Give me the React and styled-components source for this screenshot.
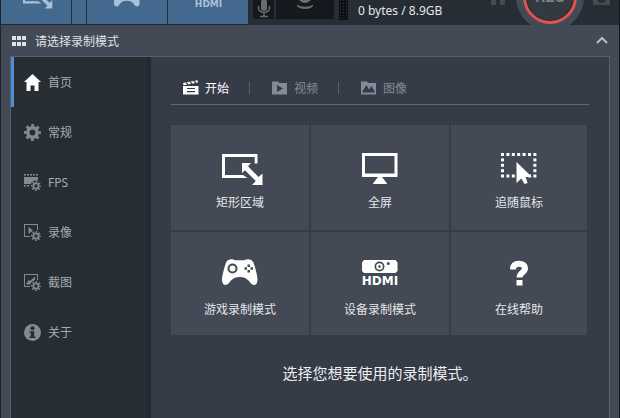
import { useState } from 'react'
import styled, { createGlobalStyle } from 'styled-components'

const GlobalStyle = createGlobalStyle`
  * {
    box-sizing: border-box;
  }
  body {
    margin: 0;
    background: #353b47;
    font-family: 'Noto Sans', 'Noto Sans CJK SC', sans-serif;
    font-size: 12px;
  }
  button {
    margin: 0;
    padding: 0;
    border: 0;
    background: none;
    color: inherit;
    font: inherit;
    cursor: pointer;
  }
  svg {
    display: block;
    flex: none;
    overflow: visible;
  }
`

const Window = styled.div`
  min-height: 100vh;
  display: flex;
  flex-direction: column;
  background: #434a56;
  border-left: 1px solid #20242c;
  border-right: 1px solid #10141a;
`

const TopBar = styled.header`
  height: 25px;
  display: flex;
  align-items: flex-end;
  overflow: hidden;
  background: #262d34;
`

const ModeButton = styled.button`
  width: ${(props) => props.$width};
  height: 80px;
  padding-bottom: ${(props) => props.$lift || '0'};
  display: flex;
  flex-direction: column;
  align-items: center;
  justify-content: flex-end;
  flex: none;
  background: #44698f;
  border-right: 1px solid #1f2f42;
  border-bottom: 1px solid #1f2a38;
  color: #a9c0d8;
`

const Device = styled.div`
  width: ${(props) => props.$width};
  height: 60px;
  margin: 0 0 6px 2px;
  display: flex;
  align-items: flex-end;
  justify-content: center;
  flex: none;
  background: #15191e;
  color: #686b6f;
`

const Devices = styled.div`
  display: flex;
  margin-left: 2px;
`

const Meter = styled.div`
  width: 9px;
  height: 60px;
  margin: 0 0 5px 5px;
  background-color: #0c0f13;
  background-image: radial-gradient(#30353c 1px, transparent 1px);
  background-size: 3px 3px;
`

const Storage = styled.span`
  margin-left: 10px;
  padding-bottom: 6px;
  line-height: 16px;
  color: #e4e6e8;
`

const Recorder = styled.div`
  margin-left: auto;
  padding-right: 9px;
  display: flex;
  align-items: flex-end;
  color: #454b53;
`

const IconButton = styled.button`
  padding-bottom: 20px;
`

const RecButton = styled.button`
  width: 54px;
  height: 54px;
  margin: 0 16px 1px 18px;
  border: 3px solid #e0544c;
  border-radius: 50%;
  background: #343a42;
  box-shadow: 0 0 0 7px #434a56, inset 0 0 0 1px #262b31;
  color: #7d8289;
  font-family: 'Liberation Sans', sans-serif;
  font-size: 14px;
  font-weight: bold;
`

const TitleBar = styled.div`
  height: 31px;
  padding: 0 11px;
  display: flex;
  align-items: center;
  gap: 8px;
  color: #dfe2e6;
`

const Title = styled.h1`
  margin: 0;
  padding-top: 2px;
  flex: 1;
  font-size: 12px;
  font-weight: normal;
  line-height: 16px;
`

const Panel = styled.div`
  flex: 1;
  margin: 0 9px;
  display: flex;
  border: 1px solid #5a616d;
  border-bottom: 0;
  background: #353b47;
`

const Sidebar = styled.nav`
  width: 140px;
  flex: none;
  background: #262d33;
  border-right: 4px solid #232930;
`

const NavItem = styled.button`
  width: 100%;
  height: 50px;
  padding-left: 10px;
  display: flex;
  align-items: center;
  gap: 7px;
  border-left: 3px solid ${(props) => (props.$active ? '#4a90d9' : 'transparent')};

  svg {
    color: ${(props) => (props.$active ? '#fff' : '#858991')};
  }
  span {
    padding-top: 2px;
    color: #a6aab1;
    line-height: 16px;
  }
`

const Main = styled.main`
  flex: 1;
  padding: 15px 20px 20px;
`

const Tabs = styled.div`
  display: flex;
  align-items: center;
  border-bottom: 1px solid #616875;
`

const Tab = styled.button`
  height: 32px;
  padding: 0 20px 0 ${(props) => (props.$first ? '12px' : '22px')};
  display: flex;
  align-items: center;
  gap: 6px;
  color: ${(props) => (props.$active ? '#fff' : '#858b96')};
`

const Divider = styled.span`
  width: 1px;
  height: 12px;
  background: #59606c;
`

const Tiles = styled.div`
  margin: 20px 2px 28px 0;
  display: grid;
  grid-template-columns: 138fr 138fr 136fr;
  grid-template-rows: 105px 103px;
  gap: 2px;
`

const Tile = styled.button`
  padding-top: 26px;
  display: flex;
  flex-direction: column;
  align-items: center;
  gap: 8px;
  background: #434a56;
  color: #fff;

  &:hover {
    background: #4b5360;
  }
`

const TileLabel = styled.span`
  line-height: 16px;
  color: #e3e5e8;
`

const Caption = styled.p`
  margin: 0;
  text-align: center;
  font-size: 15px;
  line-height: 20px;
  color: #eceef0;
`

const Hdmi = styled.text`
  font-family: 'DejaVu Sans', sans-serif;
  font-size: 12px;
  font-weight: bold;
`

function Svg({ w = 17, h = w, size = w, children }) {
  return (
    <svg
      width={size}
      height={(size * h) / w}
      viewBox={`0 0 ${w} ${h}`}
      fill="currentColor"
      aria-hidden="true"
    >
      {children}
    </svg>
  )
}

/* mode icons, drawn on a 36px box */

function RegionIcon({ size }) {
  return (
    <Svg w={36} size={size}>
      <path d="M0 3h35.500v9.500h-2.800V6H3v18h18l4.500 3H0z" />
      <path d="M20 12h9l-3 3.200L36.500 26 40.500 22.500V34H30l3.800-4L23 19.200 20 22z" />
    </Svg>
  )
}

function ScreenIcon() {
  return (
    <Svg w={36}>
      <path fillRule="evenodd" d="M0 2h35.500v24H0zM3 5v17.500h29.500V5z" />
      <path d="M16 26h4l5 6.500v.5H11v-.5z" />
    </Svg>
  )
}

function FollowIcon() {
  const top = [0, 5.400, 10.800, 16.200, 21.600, 27, 32.400]
  return (
    <Svg w={36}>
      {top.map((x) => (
        <rect key={x} x={x} y="2" width="3" height="3" />
      ))}
      {[7.400, 12.800, 18.200].map((y) => (
        <g key={y}>
          <rect x="0" y={y} width="3" height="3" />
          <rect x="32.400" y={y} width="3" height="3" />
        </g>
      ))}
      {[0, 5.400, 10.800, 27, 32.400].map((x) => (
        <rect key={x} x={x} y="23.500" width="3" height="3" />
      ))}
      <path d="M15.500 11v21l4.800-4.600 3.200 5.600 3.200-1-2.200-6H31z" />
    </Svg>
  )
}

function GamepadIcon({ size }) {
  return (
    <Svg w={36} size={size}>
      <path
        fillRule="evenodd"
        d="M8 1.500c2-.5 3 0 5 .8h9.500c2-.8 3-1.300 5-.8 2.600.6 3.700 1.700 4.500 4.500 1.500 5 3.600 12 3.500 16 0 3-1.500 5-3.500 5-2.400 0-3.800-2.600-5.500-4.500-2.300-2.500-5-3.500-8.700-3.500s-6.500 1-8.800 3.500C7.300 24.400 5.900 27 3.500 27 1.500 27 0 25 0 22 0 18 2 11 3.500 6 4.300 3.200 5.400 2.100 8 1.500zM10.500 5.500a5 5 0 1 0 0 10 5 5 0 1 0 0-10zM10.500 7.500a3 3 0 1 1 0 6 3 3 0 1 1 0-6zM25.500 6.500h2.500v2.500h-2.500zM25.500 12h2.500v2.500h-2.500zM22.500 9.200H25v2.500h-2.500zM28.500 9.200H31v2.500h-2.500z"
      />
    </Svg>
  )
}

function HdmiIcon() {
  return (
    <Svg w={36}>
      <path
        fillRule="evenodd"
        d="M2 2h31.500l2 2.500V13l-2 2H2l-2-2V4.500zM17.500 3.500a5 5 0 1 0 0 10 5 5 0 1 0 0-10zM17.500 5.200a3.300 3.300 0 1 1 0 6.600 3.300 3.300 0 1 1 0-6.600zM26.300 4a1.500 1.500 0 1 0 0 3 1.500 1.500 0 1 0 0-3z"
      />
      <circle cx="17.500" cy="8.500" r="1.300" fill="#434a56" />
      <Hdmi x="18" y="27" textAnchor="middle">
        HDMI
      </Hdmi>
    </Svg>
  )
}

function HelpIcon() {
  return (
    <Svg w={36}>
      <path
        d="M12 11.500C12 7 14.500 5.700 18 5.700c3.700 0 6 1.700 6 4.600 0 4.200-5.500 4.200-5.500 9.200"
        fill="none"
        stroke="currentColor"
        strokeWidth="6"
      />
      <rect x="15.500" y="22" width="6" height="5.500" />
    </Svg>
  )
}

/* sidebar icons */

function Gear({ cx, cy, r }) {
  const teeth = r * 0.85
  return (
    <g fill="none" stroke="currentColor">
      <circle cx={cx} cy={cy} r={r * 0.53} strokeWidth={r * 0.36} />
      <circle
        cx={cx}
        cy={cy}
        r={teeth}
        strokeWidth={r * 0.34}
        strokeDasharray={(teeth * Math.PI) / 8}
        strokeDashoffset={(teeth * Math.PI) / 16}
      />
    </g>
  )
}

function HomeIcon() {
  return (
    <Svg>
      <path d="M8.500 0 17 8h-2.500v9H10.500v-5.500h-4V17h-4V8H0z" />
    </Svg>
  )
}

function GearIcon() {
  return (
    <Svg>
      <circle cx="8.500" cy="8.500" r="4.700" fill="none" stroke="currentColor" strokeWidth="3.600" />
      <circle
        cx="8.500"
        cy="8.500"
        r="7.200"
        fill="none"
        stroke="currentColor"
        strokeWidth="2.600"
        strokeDasharray="2.827"
        strokeDashoffset="1.414"
      />
    </Svg>
  )
}

function FpsIcon() {
  return (
    <Svg>
      {[0, 3, 6, 9, 12].map((x) => (
        <rect key={x} x={x} y="0" width="2" height="1.500" />
      ))}
      <path d="M0 3h14v3.500c-4-.5-6.500 1-7 3.500H0z" />
      <rect x="0" y="11" width="2" height="1.500" />
      <rect x="3" y="11" width="2" height="1.500" />
      <Gear cx={12} cy={12} r={5} />
    </Svg>
  )
}

function VideoIcon() {
  return (
    <Svg>
      <path d="M0 0h14v6h-1V1H1v11h5v1H0z" />
      <path d="M4.500 3v7L9 6.500z" />
      <Gear cx={12} cy={12} r={5} />
    </Svg>
  )
}

function ShotIcon() {
  return (
    <Svg>
      <path d="M0 0h14v6h-1V1H1v11h5v1H0z" />
      <path d="M2 10.500 4.500 6l1.500 1L11 2.500V6L8 7.500l-2 3z" />
      <Gear cx={12} cy={12} r={5} />
    </Svg>
  )
}

function InfoIcon() {
  return (
    <Svg>
      <circle cx="8.500" cy="8.500" r="8.500" />
      <circle cx="8.500" cy="4.200" r="2" fill="#262d33" />
      <path d="M5.500 7.200h4.700v5.300h1.300V14h-6v-1.500h1.300V8.700H5.500z" fill="#262d33" />
    </Svg>
  )
}

/* tab icons */

function ClapperIcon() {
  return (
    <Svg w={16}>
      <path d="M0 3 14.500.3l.5 2.200L.5 5.300z" />
      <path d="M3 2.400 5 4.500M7 1.700l2 2.100M11 1l2 2" stroke="#353b47" strokeWidth="1.200" />
      <path
        fillRule="evenodd"
        d="M0 6h15.500v8.500H0zM4 8v1h8V8zM4 11v1.200h8V11z"
      />
    </Svg>
  )
}

function FolderVideoIcon() {
  return (
    <Svg w={16}>
      <path fillRule="evenodd" d="M0 1.500h6L7.500 3H15v11.500H0zM5 5v7l6-3.500z" />
    </Svg>
  )
}

function FolderImageIcon() {
  return (
    <Svg w={16}>
      <path
        fillRule="evenodd"
        d="M0 1.500h6L7.500 3H15v11.500H0zM1.500 12.500h12V11l-3-5-2.500 3.500L5.500 5l-4 6z"
      />
    </Svg>
  )
}

const navItems = [
  { label: '首页', Icon: HomeIcon },
  { label: '常规', Icon: GearIcon },
  { label: 'FPS', Icon: FpsIcon },
  { label: '录像', Icon: VideoIcon },
  { label: '截图', Icon: ShotIcon },
  { label: '关于', Icon: InfoIcon },
]

const tabs = [
  { label: '开始', Icon: ClapperIcon },
  { label: '视频', Icon: FolderVideoIcon },
  { label: '图像', Icon: FolderImageIcon },
]

const modes = [
  { label: '矩形区域', Icon: RegionIcon },
  { label: '全屏', Icon: ScreenIcon },
  { label: '追随鼠标', Icon: FollowIcon },
  { label: '游戏录制模式', Icon: GamepadIcon },
  { label: '设备录制模式', Icon: HdmiIcon },
  { label: '在线帮助', Icon: HelpIcon },
]

function Toolbar() {
  return (
    <TopBar>
      <ModeButton $width="71px" $lift="14px" aria-label="矩形区域">
        <RegionIcon size={26} />
      </ModeButton>
      <ModeButton $width="15px" aria-label="更多" />
      <ModeButton $width="81px" $lift="11px" aria-label="游戏录制模式">
        <GamepadIcon size={26} />
      </ModeButton>
      <ModeButton $width="81px" $lift="17px" aria-label="设备录制模式">
        <Svg w={36} h={10} size={27}>
          <Hdmi x="18" y="9" textAnchor="middle">
            HDMI
          </Hdmi>
        </Svg>
      </ModeButton>
      <Devices>
        <Device $width="21px">
          <Svg w={14} h={20}>
            <rect x="4" y="0" width="6" height="12" rx="3" />
            <path
              d="M1.500 7v2a5.500 4.500 0 0 0 11 0V7M7 13v4M3 17.500h8"
              fill="none"
              stroke="currentColor"
              strokeWidth="1.500"
            />
          </Svg>
        </Device>
        <Device $width="58px">
          <Svg w={18} h={27}>
            <circle cx="9" cy="4" r="7" />
            <path d="M1 12.500c4 3 12 3 16 0v1.500c-2 4-14 4-16 0z" />
          </Svg>
        </Device>
      </Devices>
      <Meter />
      <Storage>0 bytes / 8.9GB</Storage>
      <Recorder>
        <IconButton aria-label="暂停">
          <Svg w={14}>
            <rect x="0" y="0" width="5" height="14" />
            <rect x="9" y="0" width="5" height="14" />
          </Svg>
        </IconButton>
        <RecButton>REC</RecButton>
        <IconButton aria-label="截图">
          <Svg w={17} h={14}>
            <path
              fillRule="evenodd"
              d="M0 2h5l1-2h5l1 2h5v12H0zM8.500 4a4 4 0 1 0 0 8 4 4 0 1 0 0-8z"
            />
          </Svg>
        </IconButton>
      </Recorder>
    </TopBar>
  )
}

function App() {
  const [page, setPage] = useState('首页')
  const [tab, setTab] = useState('开始')

  return (
    <>
      <GlobalStyle />
      <Window>
        <Toolbar />
        <TitleBar>
          <Svg w={15} h={10}>
            {[0, 5, 10].map((x) => (
              <g key={x}>
                <rect x={x} y="0" width="4" height="4" />
                <rect x={x} y="6" width="4" height="4" />
              </g>
            ))}
          </Svg>
          <Title>请选择录制模式</Title>
          <button aria-label="收起">
            <Svg w={12} h={7}>
              <path d="m1 6 5-5 5 5" fill="none" stroke="#b9bec6" strokeWidth="2" />
            </Svg>
          </button>
        </TitleBar>
        <Panel>
          <Sidebar>
            {navItems.map(({ label, Icon }) => (
              <NavItem key={label} $active={page === label} onClick={() => setPage(label)}>
                <Icon />
                <span>{label}</span>
              </NavItem>
            ))}
          </Sidebar>
          <Main>
            <Tabs>
              {tabs.map(({ label, Icon }, i) => [
                i > 0 && <Divider key={`${label}-divider`} />,
                <Tab
                  key={label}
                  $first={i === 0}
                  $active={tab === label}
                  onClick={() => setTab(label)}
                >
                  <Icon />
                  {label}
                </Tab>,
              ])}
            </Tabs>
            <Tiles>
              {modes.map(({ label, Icon }) => (
                <Tile key={label}>
                  <Icon />
                  <TileLabel>{label}</TileLabel>
                </Tile>
              ))}
            </Tiles>
            <Caption>选择您想要使用的录制模式。</Caption>
          </Main>
        </Panel>
      </Window>
    </>
  )
}

export default App
